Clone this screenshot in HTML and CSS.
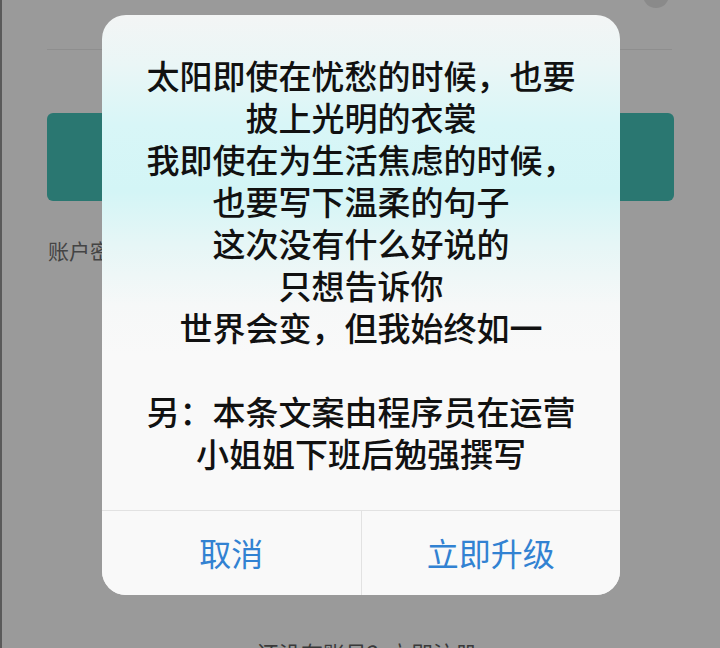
FILE: index.html
```html
<!DOCTYPE html>
<html lang="zh-CN">
<head>
<meta charset="utf-8">
<title>升级提示</title>
<link rel="stylesheet" href="styles.css">
</head>
<body>
<div class="screen">
  <div class="page">
    <div class="avatar-dot"></div>
    <div class="rule"></div>
    <div class="primary-btn"></div>
    <div class="account-label">账户密码登录</div>
    <div class="footer-link">还没有账号？立即注册</div>
  </div>
  <div class="dialog">
    <div class="dialog-body">
      <p>太阳即使在忧愁的时候，也要</p>
      <p>披上光明的衣裳</p>
      <p>我即使在为生活焦虑的时候，</p>
      <p>也要写下温柔的句子</p>
      <p>这次没有什么好说的</p>
      <p>只想告诉你</p>
      <p>世界会变，但我始终如一</p>
      <p class="blank">&nbsp;</p>
      <p>另：本条文案由程序员在运营</p>
      <p>小姐姐下班后勉强撰写</p>
    </div>
    <div class="dialog-actions">
      <div class="action">取消</div>
      <div class="action">立即升级</div>
    </div>
  </div>
</div>
</body>
</html>
```

FILE: styles.css
```css
html, body {
  margin: 0;
  padding: 0;
}
body {
  width: 720px;
  height: 648px;
  overflow: hidden;
  background: #9a9a9a;
  font-family: "Noto Sans CJK SC", "Noto Sans", sans-serif;
}
.screen {
  position: relative;
  width: 720px;
  height: 648px;
  overflow: hidden;
  border-left: 2px solid #5a5a5a;
  box-sizing: border-box;
}
.page {
  position: relative;
  padding: 49px 46px 0 45px;
  display: flex;
  flex-direction: column;
}
.avatar-dot {
  position: absolute;
  top: -18px;
  left: 641px;
  width: 26px;
  height: 26px;
  border-radius: 50%;
  background: #8a8a8a;
}
.rule {
  height: 1px;
  background: #8e8e8e;
  margin-right: 2px;
}
.primary-btn {
  margin-top: 63px;
  height: 88px;
  border-radius: 6px;
  background: #2a7771;
}
.account-label {
  margin-top: 35px;
  font-size: 21px;
  line-height: 28px;
  color: #444;
  padding-left: 1px;
}
.footer-link {
  margin-top: 374px;
  font-size: 22px;
  line-height: 28px;
  color: #3a3a3a;
  padding-left: 210px;
}
.dialog {
  position: absolute;
  top: 15px;
  left: 100px;
  width: 518px;
  height: 580px;
  border-radius: 24px;
  overflow: hidden;
  background: linear-gradient(180deg, #f3f5f5 0px, #eaf6f6 50px, #d8f6f7 110px, #d3f5f6 175px, #e6f6f6 230px, #f6f8f8 290px, #f9f9f9 340px, #f9f9f9 100%);
  display: flex;
  flex-direction: column;
}
.dialog-body {
  flex: none;
  padding-top: 39px;
  height: 495px;
  box-sizing: border-box;
  text-align: center;
  color: #111;
  font-size: 33px;
  font-weight: 500;
  line-height: 42px;
}
.dialog-body p {
  margin: 0;
  height: 42px;
  white-space: nowrap;
}
.dialog-actions {
  flex: 1;
  display: flex;
  border-top: 1px solid #e2e2e2;
  background: #f9f9f9;
}
.action {
  flex: 1;
  display: flex;
  align-items: center;
  justify-content: center;
  font-size: 32px;
  color: #3282d2;
  padding-bottom: 2px;
}
.action + .action {
  border-left: 1px solid #e2e2e2;
}
```
